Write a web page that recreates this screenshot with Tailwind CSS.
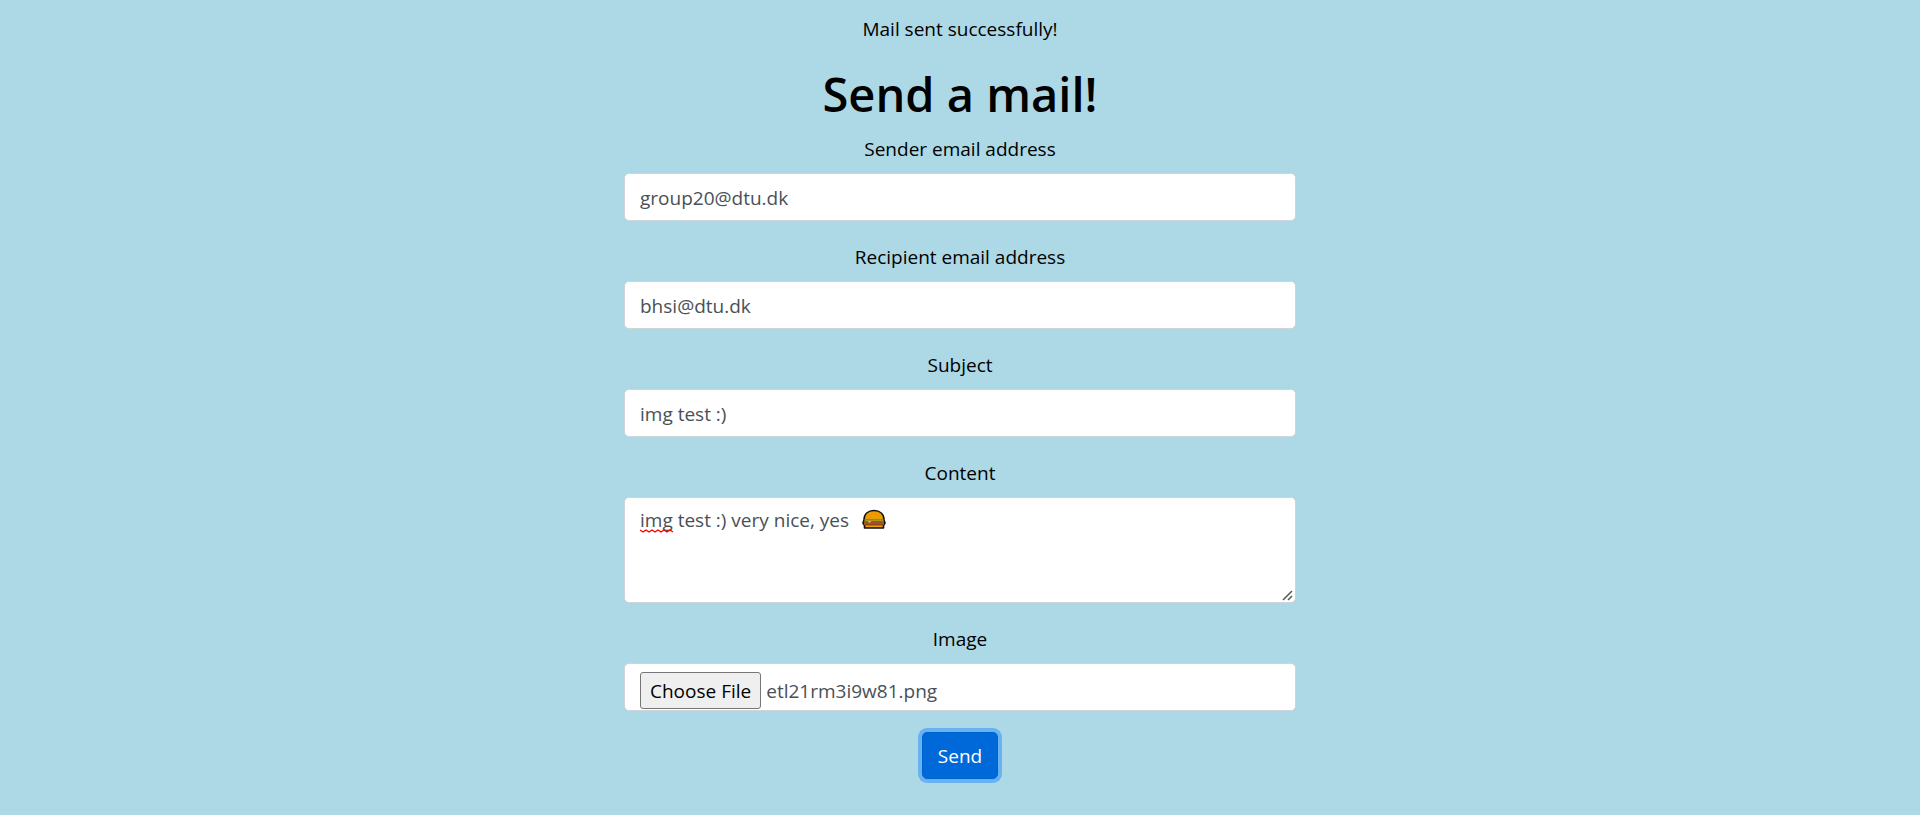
<!DOCTYPE html>
<html lang="en">
<head>
<meta charset="utf-8">
<meta name="viewport" content="width=device-width, initial-scale=1">
<title>Send a mail!</title>
<script src="https://cdn.jsdelivr.net/npm/@tailwindcss/browser@4"></script>
</head>
<body class="min-h-screen bg-[#add8e6] font-['Open_Sans',sans-serif] text-[19px] leading-[30px] text-black">
<main class="mx-auto w-[35%] pt-[14px] text-center">
  <p class="mb-5">Mail sent successfully!</p>
  <h1 class="mb-[10px] text-[47px] leading-[60px] font-semibold">Send a mail!</h1>
  <form class="flex flex-col gap-[21px]" onsubmit="return false">
    <div class="flex flex-col gap-[9px]">
      <label for="sender">Sender email address</label>
      <input id="sender" type="email" value="group20@dtu.dk" class="h-12 w-full rounded-[5px] border border-[#ced4da] bg-white px-[15px] pt-px text-[#495057]">
    </div>
    <div class="flex flex-col gap-[9px]">
      <label for="recipient">Recipient email address</label>
      <input id="recipient" type="email" value="bhsi@dtu.dk" class="h-12 w-full rounded-[5px] border border-[#ced4da] bg-white px-[15px] pt-px text-[#495057]">
    </div>
    <div class="flex flex-col gap-[9px]">
      <label for="subject">Subject</label>
      <input id="subject" type="text" value="img test :)" class="h-12 w-full rounded-[5px] border border-[#ced4da] bg-white px-[15px] pt-px text-[#495057]">
    </div>
    <div class="flex flex-col gap-[9px]">
      <label for="content">Content</label>
      <div class="relative flex">
        <textarea id="content" spellcheck="false" class="h-[106px] w-full resize-none rounded-[5px] border border-[#ced4da] bg-white px-[15px] py-[7px] text-[#495057]">img test :) very nice, yes</textarea>
        <svg class="pointer-events-none absolute top-8 left-4" width="34" height="4" viewBox="0 0 34 4" fill="none" stroke="#f00" stroke-width="1.4" aria-hidden="true"><path d="M0 1l3 2 3-2 3 2 3-2 3 2 3-2 3 2 3-2 3 2 3-2 3 2"/></svg>
        <svg class="pointer-events-none absolute top-3 left-[238px]" width="24" height="21" viewBox="0 0 24 21" aria-hidden="true">
          <path d="M2 11C2 5 6 1.500 12 1.500S22 5 22 11l1 3-1.500 2.500V19h-19v-2.500L1 14z" fill="#eb9b00" stroke="#111" stroke-width="1.600" stroke-linejoin="round"/>
          <path d="M2.500 10h19v1.500h-19z" fill="#5c9e31"/>
          <path d="M2 12h20v4H2z" fill="#a0522d"/>
          <path d="M5.500 12h4l-2 2z" fill="#f7b21b"/>
          <path d="M3 16h18" stroke="#5a2d12" stroke-width=".6"/>
        </svg>
        <svg class="pointer-events-none absolute right-[3px] bottom-[2px]" width="11" height="11" viewBox="0 0 11 11" fill="none" stroke="#555" stroke-width="1.500" aria-hidden="true"><path d="M1 10l9-9M6 10l4-4"/></svg>
      </div>
    </div>
    <div class="flex flex-col gap-[9px]">
      <label for="image">Image</label>
      <input id="image" type="file" class="h-12 w-full rounded-[5px] border border-[#ced4da] bg-white px-[15px] pt-2 text-left text-[#495057] file:mr-[5px] file:h-[37px] file:rounded-[3px] file:border file:border-solid file:border-[#767676] file:bg-[#efefef] file:px-[9px] file:text-black">
    </div>
    <button type="submit" class="h-[47px] self-center rounded-[5px] border border-[#0062cc] bg-[#0069d9] px-[15px] text-white ring-4 ring-[#69b2f2]">Send</button>
  </form>
</main>
<script>
  const picked = new DataTransfer();
  picked.items.add(new File([''], 'etl21rm3i9w81.png', { type: 'image/png' }));
  document.getElementById('image').files = picked.files;
</script>
</body>
</html>
